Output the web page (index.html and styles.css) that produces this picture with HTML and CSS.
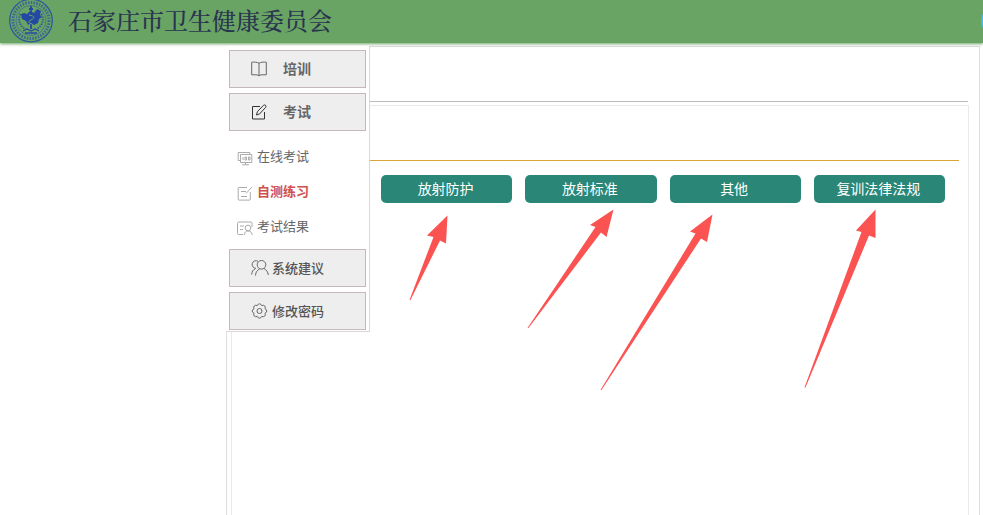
FILE: index.html
```html
<!DOCTYPE html>
<html lang="zh-CN">
<head>
<meta charset="utf-8">
<meta name="viewport" content="width=device-width, initial-scale=1">
<title>石家庄市卫生健康委员会</title>
<link rel="stylesheet" href="styles.css">
</head>
<body>
<header class="topbar">
  <svg class="emblem" viewBox="0 0 46 46" aria-hidden="true">
    <circle cx="23" cy="21.500" r="21.3" fill="none" stroke="#2c599b" stroke-width="1.3"/>
    <circle cx="23" cy="21.500" r="18" fill="none" stroke="#3a6a90" stroke-width="3" stroke-dasharray="1.6 1.2"/>
    <circle cx="23" cy="21.500" r="15" fill="none" stroke="#3a6a90" stroke-width=".8"/>
    <path d="M12.500 15c-3 6-1 12 5 15M33.500 15c3 6 1 12-5 15" fill="none" stroke="#315f94" stroke-width="2" stroke-dasharray="1.5 1"/>
    <path d="M13 15l3-1 3 1 3-3 4 2 3-4 4 2-1 4 2 2-3 2-1 4-4 2-3-2-3 2-2-4-4-2z" fill="#2449a2"/>
    <path d="M23 7v23M21 10h4" stroke="#2449a2" stroke-width="1.800"/>
    <path d="M21 16c6 1 6 3 2 5s-2 3 1 4" fill="none" stroke="#6aa464" stroke-width="1"/>
    <path d="M15 32l4-2 4 2 4-2 4 2M17 34h12" fill="none" stroke="#2449a2" stroke-width="1.3"/>
  </svg>
  <h1 class="site-name">石家庄市卫生健康委员会</h1>
  <span class="edge-badge"></span>
</header>

<div class="workspace">
  <nav class="sidebar">
    <button class="menu-button" type="button">
      <svg class="menu-icon" viewBox="0 0 16 16"><path d="M8 2.200C6 1 3 1 .7 1.200v12.600H6l2 1 2-1h5.300V1.200C13 1 10 1 8 2.200zM8 2.200v12.600"/></svg>
      <span>培训</span>
    </button>
    <button class="menu-button dark" type="button">
      <svg class="menu-icon" viewBox="0 0 16 16"><path d="M9 2.500H1.500v12.500h12V8M5.500 11l.8-3.200L12.500 1.300q1-.8 2 0t.2 2L8.500 10z"/></svg>
      <span>考试</span>
    </button>
    <ul class="submenu">
      <li><a class="sub-link" href="#">
        <svg class="sub-icon" viewBox="0 0 16 16"><path d="M3 10.500H1.200v-8h11.600V4M3.500 4.500h11.300v8H3.500zM8.500 12.500v2M5 14.800h7M6 7v3M8 7h1.500v3H8zM11.500 7H13v3h-1.500z"/></svg>
        <span>在线考试</span></a></li>
      <li><a class="sub-link current" href="#">
        <svg class="sub-icon" viewBox="0 0 16 16"><path d="M10 2.500H2q-.8 0-.8.8v11q0 .8.800.8h10.500q.8 0 .8-.8V7M4 6.500h5M4 11.500h6M9 8.500l6-6.500"/></svg>
        <span>自测练习</span></a></li>
      <li><a class="sub-link" href="#">
        <svg class="sub-icon" viewBox="0 0 16 16"><path d="M6 14.500H1.500q-1 0-1-1v-10q0-1.500 1.500-1.500h12q1 0 1 1.500V7M3 6h4M3 9.500h3M7.500 15c0-2.500 1-4 3.500-4s4.200 1.500 4.200 4"/><circle cx="11" cy="8" r="2.800"/></svg>
        <span>考试结果</span></a></li>
    </ul>
    <button class="menu-button compact" type="button">
      <svg class="menu-icon wide" viewBox="0 0 18 16"><circle cx="10.500" cy="4.800" r="4.300"/><path d="M5 8.300A3.800 3.800 0 1 1 7 1.300M4.500 15.500c.2-3.500 1.500-5 4-6.500M.7 14.500c.2-3 1.300-4.600 3.500-5.700M13 8.500c2.500 1.500 4 3.500 4.300 6.500"/></svg>
      <span>系统建议</span>
    </button>
    <button class="menu-button compact" type="button">
      <svg class="menu-icon wide" viewBox="0 0 18 16"><path d="M6.300 2.600Q7 .8 8.500.8t2.200 1.800q1.900-.8 3 .3t.3 2.900Q15.800 6.500 15.800 8T14 10.200q.8 1.800-.3 2.900t-3 .3Q10 15.200 8.500 15.200t-2.200-1.800q-1.900.8-3-.3T3 10.200Q1.200 9.500 1.200 8T3 5.800q-.8-1.800.3-2.900t3-.3z"/><circle cx="8.500" cy="8" r="2.500"/></svg>
      <span>修改密码</span>
    </button>
  </nav>

  <main class="panel">
    <div class="panel-head"></div>
    <section class="practice">
      <div class="practice-head"></div>
      <div class="topics">
        <button class="topic" type="button">放射防护</button>
        <button class="topic" type="button">放射标准</button>
        <button class="topic" type="button">其他</button>
        <button class="topic" type="button">复训法律法规</button>
      </div>
    </section>
  </main>
</div>

<svg class="arrows" width="983" height="400" viewBox="0 0 983 400" aria-hidden="true">
  <path d="M447.500 215.500L446 243.500 440 240.500 410.500 300H409.500L433.500 237 427 235.500z"/>
  <path d="M613.500 209.500L606.500 237 601 232.500 528.500 328H527.500L595.500 227 590 225z"/>
  <path d="M712.500 214.500L707 242 701 238.500 601.500 390H600.500L695.500 233.500 690 231.500z"/>
  <path d="M875.500 209.500V238L869 235.500 805.500 387.500H804.500L861.500 232 856 230.500z"/>
</svg>
</body>
</html>
```

FILE: styles.css
```css
* {
  box-sizing: border-box;
}

body {
  margin: 0;
  min-height: 100vh;
  display: flex;
  flex-direction: column;
  background: #fff;
  color: #666;
  font-family: "Noto Sans CJK SC", sans-serif;
  font-size: 13px;
}

button {
  font: inherit;
  cursor: pointer;
}

.topbar {
  position: relative;
  display: flex;
  align-items: center;
  gap: 14px;
  height: 43px;
  padding-left: 8px;
  background: #6aa464;
  box-shadow: 0 1px 3px #6aa464;
  overflow: hidden;
}

.emblem {
  width: 46px;
  height: 46px;
}

.site-name {
  margin: 0;
  color: #29354f;
  font-family: "Noto Serif CJK SC", "Noto Sans CJK SC", serif;
  font-size: 24px;
  font-weight: 500;
  line-height: 36px;
  padding-bottom: 4px;
}

.edge-badge {
  position: absolute;
  top: 7px;
  right: -26px;
  width: 28px;
  height: 28px;
  border-radius: 50%;
  background: #43bdf0;
}

.workspace {
  flex: 1;
  display: grid;
  padding: 3px 3px 0 226px;
}

.sidebar {
  grid-area: 1 / 1;
  align-self: start;
  justify-self: start;
  z-index: 1;
  display: flex;
  flex-direction: column;
  gap: 5px;
  width: 144px;
  padding: 4px 3px 1px;
  background: #fff;
  border-right: 1px solid #d9d9d9;
  border-bottom: 1px solid #d9d9d9;
}

.menu-button {
  display: flex;
  align-items: center;
  gap: 16px;
  height: 38px;
  padding: 0 0 0 21px;
  background: #eee;
  border: 1px solid #c4b8b9;
  color: #666;
  font-size: 14px;
  font-weight: 700;
}

.menu-button span,
.sub-link span {
  padding-bottom: 2px;
}

.menu-button.compact {
  gap: 3px;
  color: #555;
  font-size: 13px;
  font-weight: 500;
}

.menu-icon,
.sub-icon {
  flex: none;
  width: 16px;
  height: 16px;
  fill: none;
  stroke: #666;
  stroke-width: 1;
}

.menu-icon.wide {
  width: 18px;
}

.dark .menu-icon {
  stroke: #333;
}

.submenu {
  margin: 0;
  padding: 3px 0 0 8px;
  list-style: none;
}

.sub-link {
  display: flex;
  align-items: center;
  gap: 4px;
  height: 35px;
  color: #666;
  text-decoration: none;
}

.sub-link.current {
  color: #d0504c;
  font-weight: 700;
}

.sub-icon {
  margin-top: 3px;
  stroke: #aaa;
}

.panel {
  grid-area: 1 / 1;
  display: flex;
  flex-direction: column;
  padding: 0 11px 0 5px;
  border: 1px solid #ddd;
  border-bottom: 0;
}

.panel-head {
  height: 55px;
  margin-bottom: 3px;
  border-bottom: 1px solid #bbb;
}

.practice {
  flex: 1;
  margin-left: -1px;
  margin-right: -1px;
  border: 1px solid #eaeaea;
  border-bottom: 0;
}

.practice-head {
  height: 55px;
  margin-right: 9px;
  border-bottom: 1px solid #d9a536;
}

.topics {
  display: grid;
  grid-template-columns: repeat(4, 1fr);
  gap: 13px;
  padding: 14px 23px 0 149px;
}

.topic {
  height: 28px;
  padding: 0 2px 2px 0;
  border: 0;
  border-radius: 5px;
  background: #2a8777;
  color: #fff;
  font-size: 14px;
  line-height: 26px;
}

.arrows {
  position: absolute;
  top: 0;
  left: 0;
  z-index: 2;
  fill: #fb5252;
  pointer-events: none;
}
```
